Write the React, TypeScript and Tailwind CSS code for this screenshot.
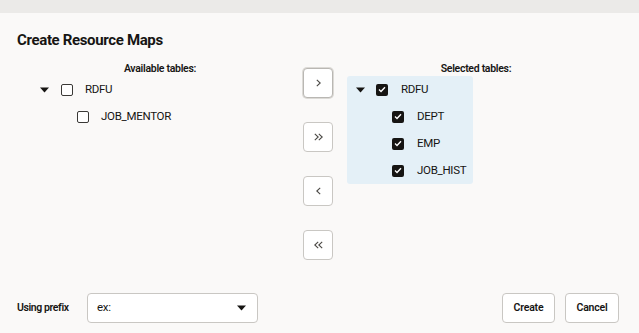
import React from "react";

const Caret = () => (
  <svg width="9" height="6" viewBox="0 0 9 6" className="block">
    <path d="M0 0.5 L9 0.5 L4.5 5.5 Z" fill="#161513" />
  </svg>
);

const Box = ({ checked }: { checked?: boolean }) =>
  checked ? (
    <span className="flex h-[12px] w-[12px] items-center justify-center rounded-[2px] bg-[#161513]">
      <svg width="8" height="7" viewBox="0 0 8 7">
        <path d="M1 3.6 L3 5.4 L7 1.2" fill="none" stroke="#fff" strokeWidth="1.4" />
      </svg>
    </span>
  ) : (
    <span className="block h-[12px] w-[12px] rounded-[2px] border-[1.5px] border-[#3a3936] bg-white" />
  );

const Chev = ({ dir, dbl }: { dir: "r" | "l"; dbl?: boolean }) => {
  const single = dir === "r" ? "M0.8 0.8 L4.2 4 L0.8 7.2" : "M4.2 0.8 L0.8 4 L4.2 7.2";
  return (
    <svg width={dbl ? 9 : 5} height="8" viewBox={dbl ? "0 0 9 8" : "0 0 5 8"}>
      <path d={single} fill="none" stroke="#4a4844" strokeWidth="1.1" />
      {dbl && (
        <path
          d={single}
          transform="translate(4 0)"
          fill="none"
          stroke="#4a4844"
          strokeWidth="1.1"
        />
      )}
    </svg>
  );
};

const MoveBtn = ({ children, focus }: { children: React.ReactNode; focus?: boolean }) => (
  <button
    className={
      "flex h-[30px] w-[30px] items-center justify-center rounded-[4px] bg-white " +
      (focus
        ? "border-[1.5px] border-[#b9b7b3] shadow-[0_0_0_1px_#dcdad6]"
        : "border border-[#c9c7c3]")
    }
  >
    {children}
  </button>
);

export default function App() {
  return (
    <div
      className="flex h-[333px] w-[639px] flex-col bg-[#faf9f8] text-[#161513]"
      style={{ fontFamily: "Roboto, 'Noto Sans', sans-serif" }}
    >
      <div className="h-[13px] w-full bg-[#ebeae8]" />
      <div className="pl-[17px] pt-[17px] text-[15px] font-bold leading-[20px] tracking-[-0.35px]">
        Create Resource Maps
      </div>
      <div className="mt-[12px] flex pl-[17px]">
        {/* left column */}
        <div className="w-[286px]">
          <div className="text-center text-[10.5px] font-semibold leading-[14px] tracking-[-0.3px]">
            Available tables:
          </div>
          <div className="flex h-[27px] items-center pl-[23px]">
            <span className="flex w-[9px] justify-center">
              <Caret />
            </span>
            <span className="ml-[12px]">
              <Box />
            </span>
            <span className="ml-[12px] text-[11.5px] tracking-[-0.3px]">RDFU</span>
          </div>
          <div className="flex h-[27px] items-center pl-[60px]">
            <Box />
            <span className="ml-[12px] text-[11.5px] tracking-[-0.3px]">JOB_MENTOR</span>
          </div>
        </div>
        {/* buttons */}
        <div className="mt-[6px] flex w-[30px] flex-col gap-[24px]">
          <MoveBtn focus>
            <Chev dir="r" />
          </MoveBtn>
          <MoveBtn>
            <Chev dir="r" dbl />
          </MoveBtn>
          <MoveBtn>
            <Chev dir="l" />
          </MoveBtn>
          <MoveBtn>
            <Chev dir="l" dbl />
          </MoveBtn>
        </div>
        {/* right column */}
        <div className="ml-[14px] w-[258px]">
          <div className="text-center text-[10.5px] font-semibold leading-[14px] tracking-[-0.3px]">
            Selected tables:
          </div>
          <div className="w-[126px] rounded-[3px] bg-[#e4f0f7]">
            <div className="flex h-[27px] items-center pl-[9px]">
              <span className="flex w-[9px] justify-center">
                <Caret />
              </span>
              <span className="ml-[11px]">
                <Box checked />
              </span>
              <span className="ml-[13px] text-[11.5px] tracking-[-0.3px]">RDFU</span>
            </div>
            {["DEPT", "EMP", "JOB_HIST"].map((t) => (
              <div key={t} className="flex h-[27px] items-center pl-[45px]">
                <Box checked />
                <span className="ml-[13px] text-[11.5px] tracking-[-0.3px]">{t}</span>
              </div>
            ))}
          </div>
        </div>
      </div>
      <div className="mb-[10px] mt-auto flex items-center px-[17px]">
        <span className="w-[70px] text-[10.5px] font-semibold tracking-[-0.4px]">Using prefix</span>
        <div className="flex h-[30px] w-[171px] items-center justify-between rounded-[4px] border border-[#c9c7c3] bg-white pl-[9px] pr-[11px]">
          <span className="text-[11.5px] tracking-[-0.3px]">ex:</span>
          <Caret />
        </div>
        <div className="ml-auto flex gap-[10px] pr-[3px]">
          <button className="h-[30px] w-[53px] rounded-[4px] border border-[#c9c7c3] bg-white text-[10.5px] font-semibold tracking-[-0.2px]">
            Create
          </button>
          <button className="h-[30px] w-[54px] rounded-[4px] border border-[#c9c7c3] bg-white text-[10.5px] font-semibold tracking-[-0.2px]">
            Cancel
          </button>
        </div>
      </div>
    </div>
  );
}
